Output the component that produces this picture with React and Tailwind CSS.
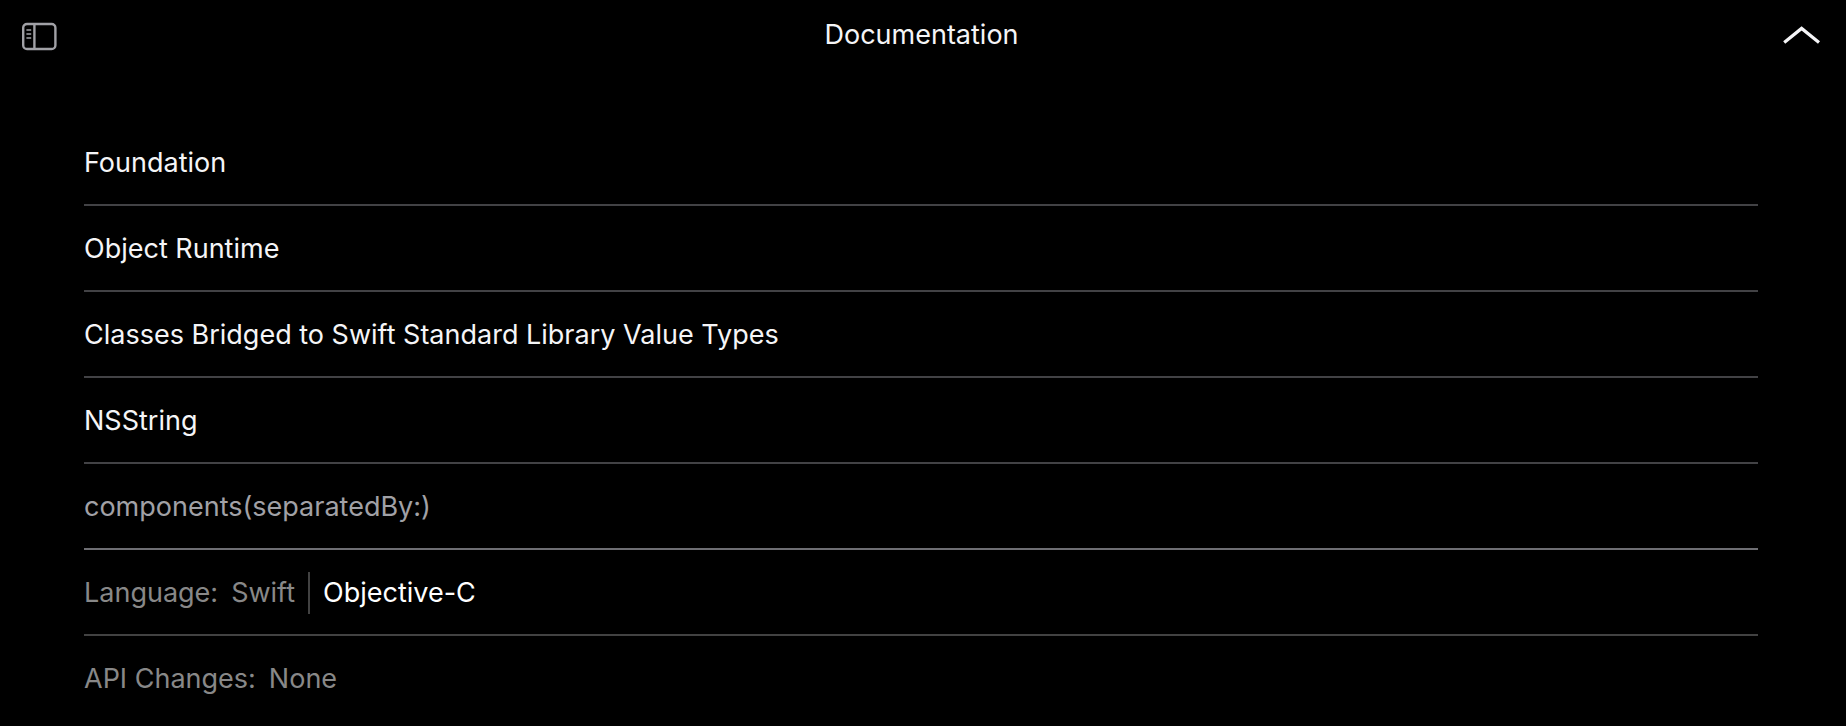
const crumbs = [
  "Foundation",
  "Object Runtime",
  "Classes Bridged to Swift Standard Library Value Types",
  "NSString",
];

function SidebarIcon() {
  return (
    <svg width="36" height="30" viewBox="0 0 36 30" fill="none" stroke="#a1a1a6" aria-hidden="true">
      <rect x="2.2" y="2" width="32.2" height="25" rx="3.8" strokeWidth="2.4" />
      <path d="M13.4 2v25" strokeWidth="2.4" />
      <path d="M5.4 8h4.8M5.4 12h4.8M5.4 16h4.8" strokeWidth="1.7" />
    </svg>
  );
}

function ChevronUpIcon() {
  return (
    <svg width="40" height="20" viewBox="0 0 40 20" fill="none" stroke="#f5f5f7" aria-hidden="true">
      <path d="M2.2 17.6 19.6 3.4 37 17.6" strokeWidth="3.2" />
    </svg>
  );
}

export default function App() {
  return (
    <div className="min-h-screen bg-black font-['Inter',sans-serif] text-[27px] leading-9 text-[#f5f5f7]">
      <header className="grid grid-cols-[1fr_auto_1fr] items-center pt-[17px] pr-6 pb-[15px] pl-[21px]">
        <button type="button" aria-label="Open documentation navigator" className="justify-self-start pt-1">
          <SidebarIcon />
        </button>
        <a href="#documentation">Documentation</a>
        <button type="button" aria-label="Close menu" className="justify-self-end">
          <ChevronUpIcon />
        </button>
      </header>
      <nav aria-label="Breadcrumbs" className="pt-13 pr-22 pl-21">
        <ul>
          {crumbs.map((name) => (
            <li key={name} className="border-b-2 border-[#424245] pt-[25px] pb-[23px]">
              <a href="#crumb" className="block">
                {name}
              </a>
            </li>
          ))}
          <li aria-current="page" className="border-b-2 border-[#6e6e73] pt-[25px] pb-[23px] text-[#a1a1a6]">
            components(separatedBy:)
          </li>
          <li className="flex items-center border-b-2 border-[#424242] pt-[22px] pb-5 leading-[42px] text-[#888888]">
            <span className="mr-[13px]">Language:</span>
            <span className="pr-[13px]">Swift</span>
            <a href="#objc" className="border-l-2 border-[#424242] pl-[13px] text-white">
              Objective-C
            </a>
          </li>
          <li className="flex pt-[25px] text-[#888888]">
            <span className="mr-[13px]">API Changes:</span>
            <span>None</span>
          </li>
        </ul>
      </nav>
    </div>
  );
}
